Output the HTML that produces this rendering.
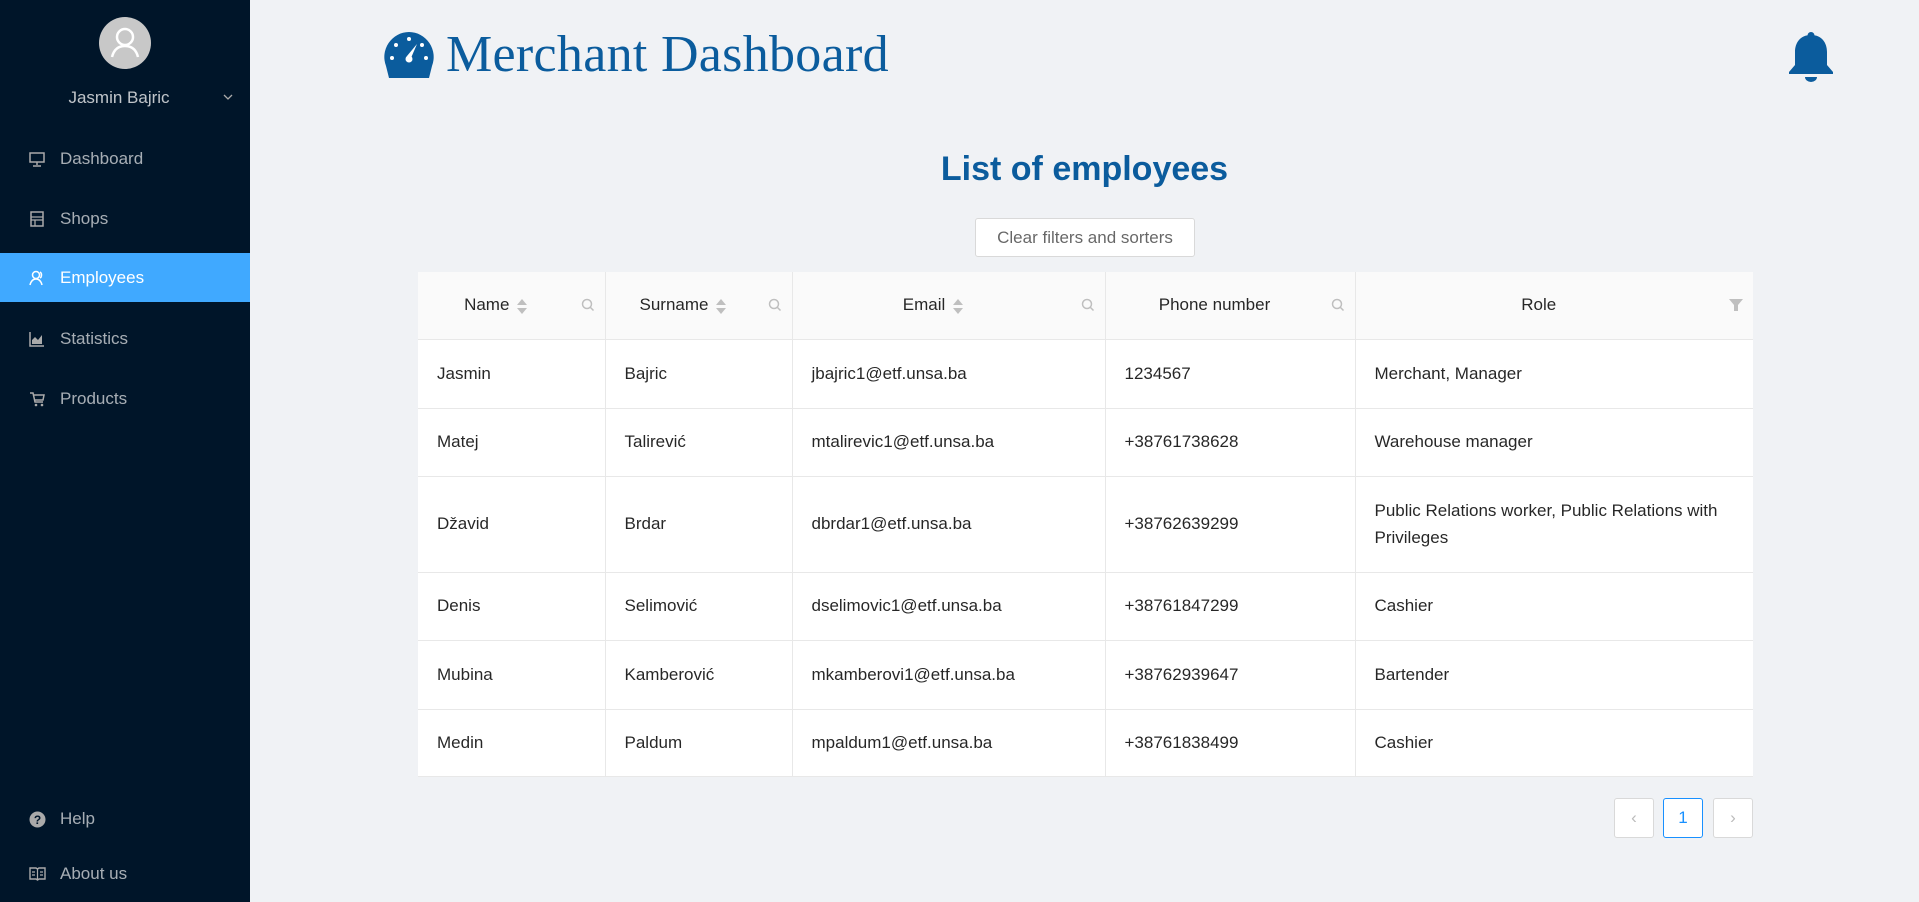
<!DOCTYPE html>
<html><head><meta charset="utf-8"><style>
*{box-sizing:border-box;margin:0;padding:0}
body{width:1919px;height:902px;background:#f0f2f5;font-family:"Liberation Sans",sans-serif;position:relative;overflow:hidden;color:rgba(0,0,0,.85)}
.side{position:absolute;left:0;top:0;width:250px;height:902px;background:#001529}
.av{position:absolute;left:99px;top:17px;width:52px;height:52px;border-radius:50%;background:#c8c8c8}
.uname{position:absolute;left:0;width:238px;top:88px;text-align:center;color:rgba(255,255,255,.75);font-size:17px}
.mi{position:absolute;left:0;width:250px;height:49px;line-height:49px;padding-left:60px;color:rgba(255,255,255,.65);font-size:17px}
.mi svg{position:absolute;left:29px;top:17px}
.mi.act{background:#40a9ff;color:#fff}
.title{position:absolute;left:446px;top:25px;font-family:"Liberation Serif",serif;font-size:52px;color:#0b5c9d;letter-spacing:0.3px}
h1{position:absolute;left:250px;right:0;top:150px;text-align:center;font-size:34px;color:#0b5c9d;font-weight:bold}
.btn{position:absolute;left:975px;top:218px;width:220px;height:39px;background:#fff;border:1px solid #d9d9d9;border-radius:3px;text-align:center;line-height:37px;font-size:17px;color:rgba(0,0,0,.6)}
table{position:absolute;left:418px;top:272px;width:1335px;border-collapse:collapse;background:#fff;font-size:17px}
td,th{border-bottom:1px solid #e8e8e8;border-right:1px solid #e8e8e8;padding:0 19px;text-align:left;font-weight:normal;position:relative}
td:last-child,th:last-child{border-right:none}
th{background:#fafafa;height:67px;text-align:center;padding-right:50px}
.s{display:inline-block;vertical-align:middle;margin-left:8px;width:10px;height:16px;position:relative}
.s:before{content:"";position:absolute;left:0;top:1px;border:5px solid transparent;border-bottom:6px solid #bfbfbf;border-top:0}
.s:after{content:"";position:absolute;left:0;bottom:0;border:5px solid transparent;border-top:6px solid #bfbfbf;border-bottom:0}
.q{position:absolute;right:10px;top:26px}
.pg{position:absolute;top:798px;width:40px;height:40px;border:1px solid #d9d9d9;border-radius:3px;background:#fff;text-align:center;line-height:38px;color:#bbb;font-size:17px}
</style></head><body>
<div class="side">
<div class="av"><svg width="52" height="52" viewBox="0 0 52 52"><circle cx="26" cy="20" r="8" fill="none" stroke="#fff" stroke-width="2.5"/><path d="M13 40c2-8 7-11 13-11s11 3 13 11" fill="none" stroke="#fff" stroke-width="2.5"/></svg></div>
<div class="uname">Jasmin Bajric</div>
<svg style="position:absolute;left:223px;top:94px" width="10" height="7"><path d="M1 1l4 4 4-4" fill="none" stroke="#aaa" stroke-width="1.3"/></svg>
<div class="mi" style="top:134px"><svg width="16" height="16"><rect x="1" y="2" width="14" height="9" fill="none" stroke="#aaa" stroke-width="1.5"/><path d="M8 11v3M4 15h8" stroke="#aaa" stroke-width="1.5"/></svg>Dashboard</div>
<div class="mi" style="top:194px"><svg width="16" height="16"><rect x="2" y="1" width="12" height="14" fill="none" stroke="#aaa" stroke-width="1.5"/><path d="M2 6h12M2 9h12M6 9v6" stroke="#aaa" stroke-width="1.3"/></svg>Shops</div>
<div class="mi act" style="top:253px"><svg width="16" height="16"><circle cx="7" cy="5" r="3.5" fill="none" stroke="#fff" stroke-width="1.5"/><path d="M1 15c1-4 3-6 6-6s5 2 6 6M11 2c2 1 2 5 0 6" fill="none" stroke="#fff" stroke-width="1.5"/></svg>Employees</div>
<div class="mi" style="top:314px"><svg width="16" height="16"><path d="M1 1v14h14" fill="none" stroke="#aaa" stroke-width="1.5"/><path d="M3 13V9l3-3 3 3 4-5v9z" fill="#aaa"/></svg>Statistics</div>
<div class="mi" style="top:374px"><svg width="16" height="16"><path d="M1 2h3l2 9h8M4 4h11l-1 5H5" fill="none" stroke="#aaa" stroke-width="1.5"/><circle cx="7" cy="14" r="1.3" fill="#aaa"/><circle cx="13" cy="14" r="1.3" fill="#aaa"/></svg>Products</div>
<div class="mi" style="top:794px"><svg width="17" height="17"><circle cx="8.5" cy="8.5" r="8" fill="#aaa"/><text x="8.5" y="13" font-size="12" font-weight="bold" text-anchor="middle" fill="#001529" font-family="Liberation Sans">?</text></svg>Help</div>
<div class="mi" style="top:849px"><svg width="17" height="16"><path d="M1 2h6l1.5 1L10 2h6v11h-6l-1.5 1L7 13H1z" fill="none" stroke="#aaa" stroke-width="1.4"/><path d="M8.5 3v10M3 6h3M3 9h3M11 6h3M11 9h3" stroke="#aaa" stroke-width="1.2"/></svg>About us</div>
</div>
<svg style="position:absolute;left:384px;top:32px" width="50" height="46" viewBox="0 0 50 46"><path d="M25 0a25 25 0 0 1 23 34l-3 12H5L2 34A25 25 0 0 1 25 0z" fill="#0b5c9d"/><g fill="#fff"><circle cx="25" cy="7" r="2"/><circle cx="12" cy="13" r="2"/><circle cx="38" cy="13" r="2"/><circle cx="8" cy="26" r="2"/><circle cx="42" cy="26" r="2"/><path d="M33 12l-6 14-4-2z"/><circle cx="25" cy="27" r="3.5"/></g></svg>
<div class="title">Merchant Dashboard</div>
<svg style="position:absolute;left:1789px;top:32px" width="44" height="51" viewBox="0 0 44 51"><circle cx="22" cy="3.5" r="3.5" fill="#0b5c9d"/><path d="M22 3C11 3 6 11 6 20v13L0 40v2h44v-2l-6-7V20C38 11 33 3 22 3z" fill="#0b5c9d"/><path d="M16 45h12a6 5 0 0 1-12 0z" fill="#0b5c9d"/></svg>
<h1>List of employees</h1>
<div class="btn">Clear filters and sorters</div>
<table>
<colgroup><col style="width:187px"><col style="width:187px"><col style="width:313px"><col style="width:250px"><col></colgroup>
<tr><th>Name<span class="s"></span><svg class="q" width="14" height="14"><circle cx="6" cy="6" r="4.5" fill="none" stroke="#bfbfbf" stroke-width="1.5"/><path d="M9.5 9.5l3 3" stroke="#bfbfbf" stroke-width="1.5"/></svg></th>
<th>Surname<span class="s"></span><svg class="q" width="14" height="14"><circle cx="6" cy="6" r="4.5" fill="none" stroke="#bfbfbf" stroke-width="1.5"/><path d="M9.5 9.5l3 3" stroke="#bfbfbf" stroke-width="1.5"/></svg></th>
<th>Email<span class="s"></span><svg class="q" width="14" height="14"><circle cx="6" cy="6" r="4.5" fill="none" stroke="#bfbfbf" stroke-width="1.5"/><path d="M9.5 9.5l3 3" stroke="#bfbfbf" stroke-width="1.5"/></svg></th>
<th>Phone number<svg class="q" width="14" height="14"><circle cx="6" cy="6" r="4.5" fill="none" stroke="#bfbfbf" stroke-width="1.5"/><path d="M9.5 9.5l3 3" stroke="#bfbfbf" stroke-width="1.5"/></svg></th>
<th>Role<svg class="q" width="14" height="14"><path d="M0 1h14l-5 6v6H5V7z" fill="#bfbfbf"/></svg></th></tr>
<tr style="height:69px"><td>Jasmin</td><td>Bajric</td><td>jbajric1@etf.unsa.ba</td><td>1234567</td><td>Merchant, Manager</td></tr>
<tr style="height:68px"><td>Matej</td><td>Talirević</td><td>mtalirevic1@etf.unsa.ba</td><td>+38761738628</td><td>Warehouse manager</td></tr>
<tr style="height:96px"><td>Džavid</td><td>Brdar</td><td>dbrdar1@etf.unsa.ba</td><td>+38762639299</td><td style="line-height:27px">Public Relations worker, Public Relations with Privileges</td></tr>
<tr style="height:68px"><td>Denis</td><td>Selimović</td><td>dselimovic1@etf.unsa.ba</td><td>+38761847299</td><td>Cashier</td></tr>
<tr style="height:69px"><td>Mubina</td><td>Kamberović</td><td>mkamberovi1@etf.unsa.ba</td><td>+38762939647</td><td>Bartender</td></tr>
<tr style="height:67px"><td>Medin</td><td>Paldum</td><td>mpaldum1@etf.unsa.ba</td><td>+38761838499</td><td>Cashier</td></tr>
</table>
<div class="pg" style="left:1614px">‹</div>
<div class="pg" style="left:1663px;border-color:#1890ff;color:#1890ff">1</div>
<div class="pg" style="left:1713px">›</div>
</body></html>
